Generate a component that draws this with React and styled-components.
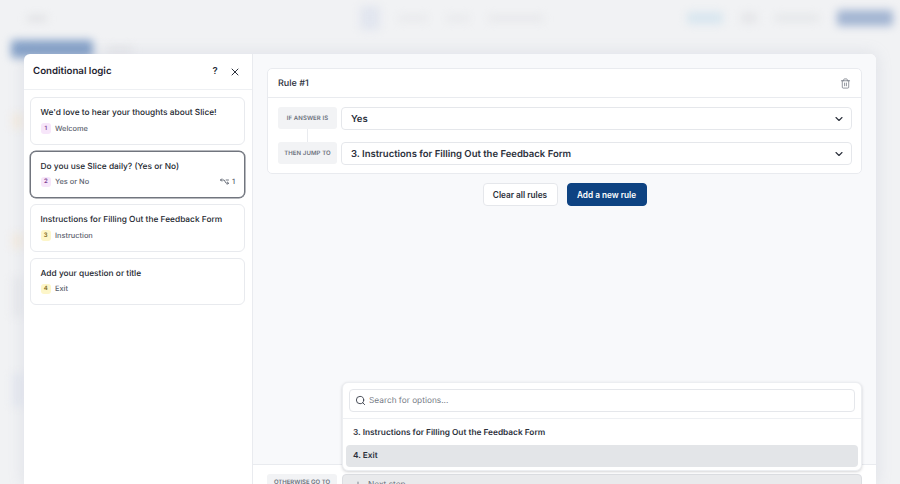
import React from 'react';
import styled, { createGlobalStyle } from 'styled-components';
import { ChevronDown, Search, Trash2, X, ArrowDown } from 'lucide-react';

const GlobalStyle = createGlobalStyle`
  html, body {
    margin: 0;
    padding: 0;
    height: 100%;
    overflow: hidden;
    background: #f1f2f4;
    font-family: Inter, "Liberation Sans", sans-serif;
    color: #1f2430;
    text-rendering: geometricPrecision;
  }
  * { box-sizing: border-box; }
`;

const Page = styled.div`
  position: relative;
  width: 900px;
  height: 484px;
  overflow: hidden;
  background: #f1f2f4;
`;

/* the app behind the modal, only seen blurred */
const Backdrop = styled.div`
  height: 100%;
  display: flex;
  flex-direction: column;
  filter: blur(4px);
`;

const BackTop = styled.div`
  height: 36px;
  display: flex;
  align-items: center;
  padding: 0 7px 0 27px;
  gap: 18px;
`;

const BackSpacer = styled.div`
  flex: ${(p) => (p.$w ? `0 0 ${p.$w}px` : 1)};
`;

const BackMark = styled.div`
  width: ${(p) => p.$w}px;
  height: ${(p) => p.$h || 7}px;
  margin-top: ${(p) => p.$mt || 0}px;
  border-radius: 3px;
  background: ${(p) => p.$c || '#dfe1e6'};
`;

const BackTabs = styled.div`
  display: flex;
  align-items: center;
  gap: 14px;
  padding: 4px 0 0 11px;
`;

const BackSide = styled.div`
  display: flex;
  flex-direction: column;
  padding-left: 12px;
`;

const Overlay = styled.div`
  position: absolute;
  inset: 0;
  display: flex;
  justify-content: center;
  padding-top: 54px;
`;

const Modal = styled.div`
  width: 852px;
  height: 430px;
  display: flex;
  background: #fff;
  border-radius: 6px 6px 0 0;
  box-shadow: 0 0 16px rgba(150, 160, 180, 0.22);
  overflow: hidden;
`;

const Sidebar = styled.aside`
  width: 229px;
  flex-shrink: 0;
  display: flex;
  flex-direction: column;
  border-right: 1px solid #e9ebef;
`;

const SideHeader = styled.div`
  height: 36px;
  display: flex;
  align-items: center;
  padding: 0 7px 0 9px;
  border-bottom: 1px solid #eef0f3;
`;

const Title = styled.h2`
  flex: 1;
  margin: 0;
  font-size: 9.7px;
  font-weight: 600;
  color: #1f2430;
`;

const HeadIcon = styled.span`
  width: 20px;
  display: flex;
  justify-content: center;
  font-size: 9.5px;
  font-weight: 600;
  color: #2b303b;
`;

const CardList = styled.div`
  display: flex;
  flex-direction: column;
  gap: 6px;
  padding: 7px 7px 0 6px;
`;

const Card = styled.div`
  height: 47.5px;
  border-radius: 6px;
  background: #fff;
  padding: 9px 9px 0 9.5px;
  border: 1px solid ${(p) => (p.$active ? '#71757e' : '#e8eaee')};
  box-shadow: ${(p) => (p.$active ? '0 0 0 0.5px #71757e' : 'none')};
`;

const CardTitle = styled.div`
  font-size: 8.35px;
  line-height: 12px;
  font-weight: 500;
  color: #23272f;
  white-space: nowrap;
`;

const CardMeta = styled.div`
  display: flex;
  align-items: center;
  margin-top: 4px;
  font-size: 7.4px;
  font-weight: 500;
  color: #5c626e;
`;

const Badge = styled.span`
  width: 10.5px;
  height: 10.5px;
  border-radius: 3px;
  margin-right: 4px;
  display: flex;
  align-items: center;
  justify-content: center;
  font-size: 6px;
  font-weight: 600;
  background: ${(p) => p.$bg};
  color: ${(p) => p.$fg};
`;

const JumpCount = styled.span`
  margin-left: auto;
  display: flex;
  align-items: center;
  gap: 2px;
`;

const Main = styled.main`
  position: relative;
  flex: 1;
  display: flex;
  flex-direction: column;
  background: #f8f9fb;
  padding: 14px 14px 0;
`;

const RuleCard = styled.section`
  background: #fff;
  border: 1px solid #e9ebef;
  border-radius: 5px;
`;

const RuleHeader = styled.div`
  height: 29px;
  display: flex;
  align-items: center;
  justify-content: space-between;
  padding: 0 10px;
  border-bottom: 1px solid #e9ebef;
  font-size: 9px;
  font-weight: 500;
  color: #2b303b;
`;

const RuleBody = styled.div`
  display: flex;
  flex-direction: column;
  gap: 13px;
  padding: 9px 9px 9px 10px;
`;

const RuleRow = styled.div`
  display: flex;
  gap: 4px;
`;

const RuleTag = styled.div`
  position: relative;
  width: 59px;
  height: 22px;
  flex-shrink: 0;
  display: flex;
  align-items: center;
  justify-content: center;
  border-radius: 3px;
  background: #f2f3f5;
  font-size: 6px;
  font-weight: 600;
  letter-spacing: 0.1px;
  color: #6b707b;
  white-space: nowrap;
`;

const RuleLink = styled.span`
  position: absolute;
  left: 29px;
  top: 22px;
  width: 1px;
  height: 14px;
  background: #e9ebef;
`;

const Select = styled.div`
  flex: 1;
  height: 23px;
  margin-bottom: -1px;
  display: flex;
  align-items: center;
  justify-content: space-between;
  padding: 1px 6.5px 0 9px;
  background: #fff;
  border: 1px solid #e5e7eb;
  border-bottom-width: 1.5px;
  border-radius: 4px;
  font-size: 9.5px;
  font-weight: 600;
  color: #2b303b;
`;

const Actions = styled.div`
  display: flex;
  justify-content: center;
  gap: 9px;
  margin-top: 9px;
`;

const Button = styled.button`
  height: 23px;
  padding: 0;
  width: ${(p) => (p.$primary ? 80 : 75)}px;
  border-radius: 4px;
  font-family: inherit;
  font-size: 8.25px;
  font-weight: 600;
  border: 1px solid ${(p) => (p.$primary ? '#0e4382' : '#e5e7eb')};
  background: ${(p) => (p.$primary ? '#0e4382' : '#fff')};
  color: ${(p) => (p.$primary ? '#fff' : '#2b303b')};
`;

const Footer = styled.div`
  position: absolute;
  left: 0;
  right: 0;
  bottom: 0;
  height: 20px;
  display: flex;
  gap: 5px;
  padding: 9px 14px 0;
  background: #fff;
  border-top: 1px solid #e9ebef;
`;

const FooterTag = styled.div`
  width: 70px;
  height: 20px;
  padding-top: 5px;
  border-radius: 3px;
  background: #f2f3f5;
  text-align: center;
  font-size: 6px;
  font-weight: 600;
  color: #6b707b;
`;

const FooterSelect = styled.div`
  flex: 1;
  height: 20px;
  display: flex;
  align-items: flex-start;
  gap: 5px;
  padding: 5px 7px 0 10px;
  background: #e9eaec;
  border: 1px solid #dcdee2;
  border-radius: 4px;
  font-size: 8.3px;
  color: #6b707b;
`;

const FooterChevron = styled.span`
  margin-left: auto;
  display: flex;
`;

const Dropdown = styled.div`
  position: absolute;
  left: 89px;
  right: 14px;
  bottom: 13px;
  background: #fff;
  border: 1px solid #eceef1;
  border-radius: 6px;
  box-shadow: 0 1px 3px rgba(60, 60, 70, 0.22);
`;

const SearchWrap = styled.div`
  padding: 6px;
  border-bottom: 1px solid #eef0f3;
`;

const SearchBox = styled.div`
  height: 23px;
  display: flex;
  align-items: center;
  gap: 3px;
  padding: 0 5px;
  border: 1px solid #e5e7eb;
  border-radius: 4px;
  font-size: 8.3px;
  color: #757a85;
`;

const OptionList = styled.div`
  display: flex;
  flex-direction: column;
  gap: 1px;
  padding: 3px;
`;

const Option = styled.div`
  height: 22px;
  display: flex;
  align-items: center;
  padding: 0 7px;
  border-radius: 4px;
  font-size: 8.3px;
  font-weight: 600;
  color: #2b303b;
  background: ${(p) => (p.$active ? '#e3e5e8' : 'transparent')};
`;

const BranchIcon = () => (
  <svg width="11" height="8" viewBox="0 0 12 10" fill="none" stroke="#5c626e" strokeWidth="1.1" strokeLinecap="round" strokeLinejoin="round">
    <path d="M1 2.5h4.5l2.5 4h3" />
    <path d="M8 2.5h3" />
    <path d="M2.5 1L1 2.5 2.5 4" />
    <path d="M9.5 5l1.5 1.5L9.5 8" />
  </svg>
);

const questions = [
  { n: 1, title: "We'd love to hear your thoughts about Slice!", type: 'Welcome', bg: '#f7e6fa', fg: '#7f3f92' },
  { n: 2, title: 'Do you use Slice daily? (Yes or No)', type: 'Yes or No', bg: '#f7e6fa', fg: '#7f3f92', active: true, jumps: 1 },
  { n: 3, title: 'Instructions for Filling Out the Feedback Form', type: 'Instruction', bg: '#fdf6c9', fg: '#7d6a1c' },
  { n: 4, title: 'Add your question or title', type: 'Exit', bg: '#fdf6c9', fg: '#7d6a1c' },
];

export default function App() {
  return (
    <Page>
      <GlobalStyle />
      <Backdrop>
        <BackTop>
          <BackMark $w={20} $h={5} $c="#dcdde0" />
          <BackSpacer $w={277} />
          <BackMark $w={20} $h={24} $c="#e2e6ef" />
          <BackMark $w={30} $h={5} $c="#e6e7ea" />
          <BackMark $w={24} $h={5} $c="#e6e7ea" />
          <BackMark $w={56} $h={5} $c="#e4e5e8" />
          <BackSpacer />
          <BackMark $w={36} $h={12} $c="#d8e6ef" />
          <BackMark $w={16} $h={10} $c="#e4e5e8" />
          <BackMark $w={44} $h={6} $c="#e2e4e7" />
          <BackMark $w={56} $h={16} $c="#a3b5d2" />
        </BackTop>
        <BackTabs>
          <BackMark $w={82} $h={18} $c="#86a2c8" />
          <BackMark $w={26} $h={5} $c="#e2e3e6" />
        </BackTabs>
        <BackSide>
          <BackMark $w={12} $h={16} $mt={55} $c="#f4ece2" />
          <BackMark $w={12} $h={16} $mt={104} $c="#f4ece2" />
          <BackMark $w={12} $h={40} $mt={28} $c="#e9eaed" />
          <BackMark $w={12} $h={34} $mt={56} $c="#e6e9f0" />
        </BackSide>
      </Backdrop>
      <Overlay>
        <Modal>
          <Sidebar>
            <SideHeader>
              <Title>Conditional logic</Title>
              <HeadIcon>?</HeadIcon>
              <HeadIcon><X size={12} strokeWidth={2} /></HeadIcon>
            </SideHeader>
            <CardList>
              {questions.map((q) => (
                <Card key={q.n} $active={q.active}>
                  <CardTitle>{q.title}</CardTitle>
                  <CardMeta>
                    <Badge $bg={q.bg} $fg={q.fg}>{q.n}</Badge>
                    {q.type}
                    {q.jumps && (
                      <JumpCount>
                        <BranchIcon />
                        {q.jumps}
                      </JumpCount>
                    )}
                  </CardMeta>
                </Card>
              ))}
            </CardList>
          </Sidebar>
          <Main>
            <RuleCard>
              <RuleHeader>
                Rule #1
                <Trash2 size={11} color="#6b707b" strokeWidth={1.6} />
              </RuleHeader>
              <RuleBody>
                <RuleRow>
                  <RuleTag>IF ANSWER IS<RuleLink /></RuleTag>
                  <Select>Yes<ChevronDown size={12} strokeWidth={2.2} color="#2b303b" /></Select>
                </RuleRow>
                <RuleRow>
                  <RuleTag>THEN JUMP TO</RuleTag>
                  <Select>3. Instructions for Filling Out the Feedback Form<ChevronDown size={12} strokeWidth={2.2} color="#2b303b" /></Select>
                </RuleRow>
              </RuleBody>
            </RuleCard>
            <Actions>
              <Button>Clear all rules</Button>
              <Button $primary>Add a new rule</Button>
            </Actions>
            <Footer>
              <FooterTag>OTHERWISE GO TO</FooterTag>
              <FooterSelect>
                <ArrowDown size={10} />
                Next step
                <FooterChevron><ChevronDown size={12} strokeWidth={2.2} /></FooterChevron>
              </FooterSelect>
            </Footer>
            <Dropdown>
              <SearchWrap>
                <SearchBox><Search size={11} color="#3a3f4a" />Search for options...</SearchBox>
              </SearchWrap>
              <OptionList>
                <Option>3. Instructions for Filling Out the Feedback Form</Option>
                <Option $active>4. Exit</Option>
              </OptionList>
            </Dropdown>
          </Main>
        </Modal>
      </Overlay>
    </Page>
  );
}
